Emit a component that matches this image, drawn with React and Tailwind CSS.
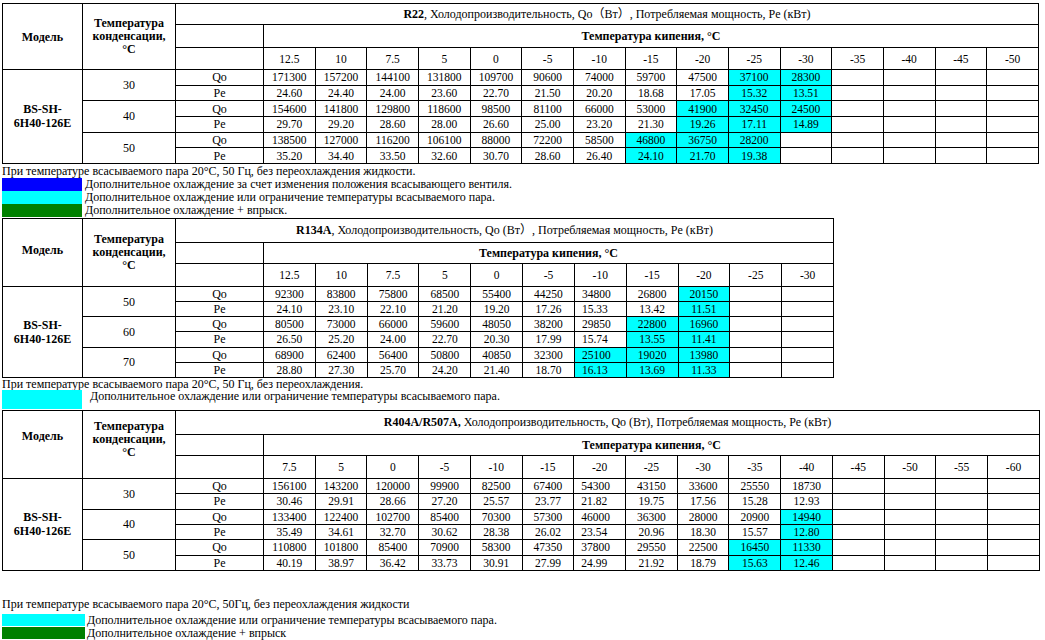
import React from "react";

const CY = "bg-[#00ffff]";

const tables = [
  {
    title: (
      <>
        <b>R22</b>, Холодопроизводительность, Qo（Вт）, Потребляемая мощность, Pe (кВт)
      </>
    ),
    width: "w-[1037px]",
    heads: ["h-[21px]", "h-[23px]", "h-[22px]"],
    rowH: "h-[15.67px]",
    headPad: ["", ""],
    cols: ["12.5", "10", "7.5", "5", "0", "-5", "-10", "-15", "-20", "-25", "-30", "-35", "-40", "-45", "-50"],
    left: [],
    groups: [
      {
        t: "30",
        qo: ["171300", "157200", "144100", "131800", "109700", "90600", "74000", "59700", "47500", "37100*", "28300*"],
        pe: ["24.60", "24.40", "24.00", "23.60", "22.70", "21.50", "20.20", "18.68", "17.05", "15.32*", "13.51*"],
      },
      {
        t: "40",
        qo: ["154600", "141800", "129800", "118600", "98500", "81100", "66000", "53000", "41900*", "32450*", "24500*"],
        pe: ["29.70", "29.20", "28.60", "28.00", "26.60", "25.00", "23.20", "21.30", "19.26*", "17.11*", "14.89*"],
      },
      {
        t: "50",
        qo: ["138500", "127000", "116200", "106100", "88000", "72200", "58500", "46800*", "36750*", "28200*"],
        pe: ["35.20", "34.40", "33.50", "32.60", "30.70", "28.60", "26.40", "24.10*", "21.70*", "19.38*"],
      },
    ],
  },
  {
    title: (
      <>
        <b>R134A</b>, Холодопроизводительность, Qo (Вт）, Потребляемая мощность, Pe (кВт)
      </>
    ),
    width: "w-[832px]",
    heads: ["h-[24px]", "h-[21px]", "h-[23px]"],
    rowH: "h-[15.17px]",
    headPad: ["pb-[5px]", ""],
    cols: ["12.5", "10", "7.5", "5", "0", "-5", "-10", "-15", "-20", "-25", "-30"],
    left: [6],
    groups: [
      {
        t: "50",
        qo: ["92300", "83800", "75800", "68500", "55400", "44250", "34800", "26800", "20150*"],
        pe: ["24.10", "23.10", "22.10", "21.20", "19.20", "17.26", "15.33", "13.42", "11.51*"],
      },
      {
        t: "60",
        qo: ["80500", "73000", "66000", "59600", "48050", "38200", "29850", "22800*", "16960*"],
        pe: ["26.50", "25.20", "24.00", "22.70", "20.30", "17.99", "15.74", "13.55*", "11.41*"],
      },
      {
        t: "70",
        qo: ["68900", "62400", "56400", "50800", "40850", "32300", "25100*", "19020*", "13980*"],
        pe: ["28.80", "27.30", "25.70", "24.20", "21.40", "18.70", "16.13*", "13.69*", "11.33*"],
      },
    ],
  },
  {
    title: (
      <>
        <b>R404A/R507A,</b> Холодопроизводительность, Qo (Вт), Потребляемая мощность, Pe (кВт)
      </>
    ),
    width: "w-[1038px]",
    heads: ["h-[24px]", "h-[21px]", "h-[23px]"],
    rowH: "h-[15.33px]",
    headPad: ["pb-[16px]", "pb-[10px]"],
    cols: ["7.5", "5", "0", "-5", "-10", "-15", "-20", "-25", "-30", "-35", "-40", "-45", "-50", "-55", "-60"],
    left: [6],
    groups: [
      {
        t: "30",
        qo: ["156100", "143200", "120000", "99900", "82500", "67400", "54300", "43150", "33600", "25550", "18730"],
        pe: ["30.46", "29.91", "28.66", "27.20", "25.57", "23.77", "21.82", "19.75", "17.56", "15.28", "12.93"],
      },
      {
        t: "40",
        qo: ["133400", "122400", "102700", "85400", "70300", "57300", "46000", "36300", "28000", "20900", "14940*"],
        pe: ["35.49", "34.61", "32.70", "30.62", "28.38", "26.02", "23.54", "20.96", "18.30", "15.57", "12.80*"],
      },
      {
        t: "50",
        qo: ["110800", "101800", "85400", "70900", "58300", "47350", "37800", "29550", "22500", "16450*", "11330*"],
        pe: ["40.19", "38.97", "36.42", "33.73", "30.91", "27.99", "24.99", "21.92", "18.79", "15.63*", "12.46*"],
      },
    ],
  },
];

const cell = "border border-black p-0 text-center align-middle";

function DataCells({ values, cols, left }) {
  return cols.map((_, i) => {
    const raw = values[i] || "";
    const hi = raw.endsWith("*");
    const v = raw.replace("*", "");
    return (
      <td
        key={i}
        className={`${cell} text-[11.5px] ${hi ? CY : ""} ${left.includes(i) ? "text-left pl-[7px]" : ""}`}
      >
        {v}
      </td>
    );
  });
}

function PerfTable({ data }) {
  const n = data.cols.length;
  return (
    <table className={`table-fixed border-collapse ${data.width} text-[12px] leading-[12px]`}>
      <colgroup>
        <col className="w-[80px]" />
        <col className="w-[93px]" />
        <col className="w-[88px]" />
        {data.cols.map((c) => (
          <col key={c} />
        ))}
      </colgroup>
      <thead>
        <tr className={data.heads[0]}>
          <th rowSpan={3} className={`${cell} font-bold ${data.headPad[0]}`}>
            Модель
          </th>
          <th rowSpan={3} className={`${cell} font-bold leading-[13px] ${data.headPad[1]}`}>
            Температура
            <br />
            конденсации,
            <br />
            °C
          </th>
          <th colSpan={n + 1} className={`${cell} font-normal`}>
            {data.title}
          </th>
        </tr>
        <tr className={data.heads[1]}>
          <td className={cell}></td>
          <td colSpan={n} className={`${cell} font-bold`}>
            Температура кипения, °C
          </td>
        </tr>
        <tr className={data.heads[2]}>
          <td className={cell}></td>
          {data.cols.map((c) => (
            <td key={c} className={`${cell} text-[11.5px]`}>
              {c}
            </td>
          ))}
        </tr>
      </thead>
      <tbody>
        {data.groups.map((g, gi) => (
          <React.Fragment key={g.t}>
            <tr className={data.rowH}>
              {gi === 0 && (
                <td rowSpan={6} className={`${cell} font-bold leading-[14px]`}>
                  BS-SH-
                  <br />
                  6H40-126E
                </td>
              )}
              <td rowSpan={2} className={cell}>
                {g.t}
              </td>
              <td className={cell}>Qo</td>
              <DataCells values={g.qo} cols={data.cols} left={data.left} />
            </tr>
            <tr className={data.rowH}>
              <td className={cell}>Pe</td>
              <DataCells values={g.pe} cols={data.cols} left={data.left} />
            </tr>
          </React.Fragment>
        ))}
      </tbody>
    </table>
  );
}

function Legend({ color, text, w = "w-[80px]", h = "h-[13px]", gap = "pl-[3px]" }) {
  return (
    <div className="flex items-start">
      <div className={`${w} ${h} ${color} shrink-0`}></div>
      <div className={`${gap} leading-[13px]`}>{text}</div>
    </div>
  );
}

export default function App() {
  return (
    <div className="font-['Liberation_Serif','Noto_Sans_CJK_SC',serif] text-black bg-white text-[12px] w-[1045px] h-[640px] overflow-hidden pl-[2px] pt-[3px]">
      <PerfTable data={tables[0]} />
      <div className="leading-[14px]">При температуре всасываемого пара 20°C, 50 Гц, без переохлаждения жидкости.</div>
      <Legend color="bg-[#0000ff]" text="Дополнительное охлаждение за счет изменения положения всасывающего вентиля." />
      <Legend color={CY} text="Дополнительное охлаждение или ограничение температуры всасываемого пара." />
      <Legend color="bg-[#008000]" text="Дополнительное охлаждение + впрыск." />
      <div className="h-[1px]"></div>
      <PerfTable data={tables[1]} />
      <div className="leading-[12px]">При температуре всасываемого пара 20°C, 50 Гц, без переохлаждения.</div>
      <Legend
        color={CY}
        h="h-[19px]"
        gap="pl-[8px]"
        text="Дополнительное охлаждение или ограничение температуры всасываемого пара."
      />
      <div className="h-[1px]"></div>
      <PerfTable data={tables[2]} />
      <div className="h-[26px]"></div>
      <div className="leading-[14px]">При температуре всасываемого пара 20°C, 50Гц, без переохлаждения жидкости</div>
      <div className="h-[3px]"></div>
      <Legend
        color={CY}
        w="w-[83px]"
        h="h-[12px]"
        gap="pl-[2px]"
        text="Дополнительное охлаждение или ограничение температуры всасываемого пара."
      />
      <Legend color="bg-[#008000]" w="w-[83px]" h="h-[12px]" gap="pl-[2px]" text="Дополнительное охлаждение + впрыск" />
    </div>
  );
}
